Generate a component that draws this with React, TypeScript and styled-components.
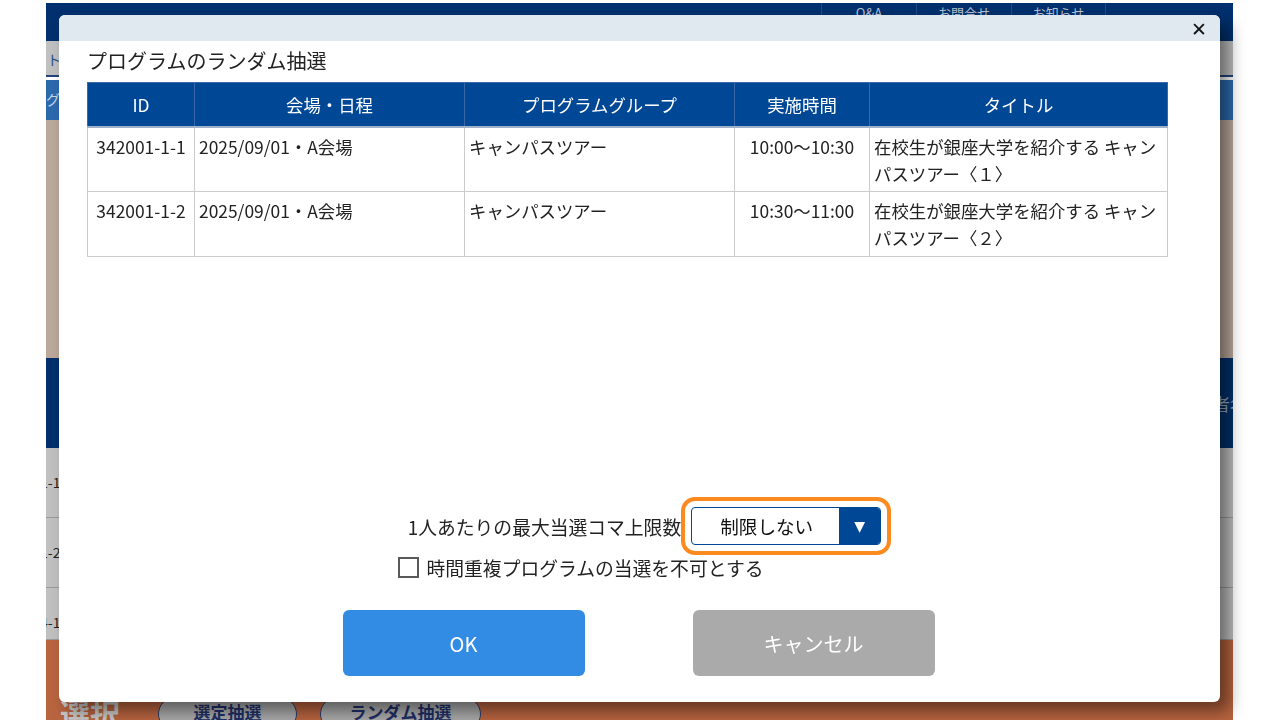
import React from "react";
import styled, { createGlobalStyle } from "styled-components";

const Global = createGlobalStyle`
  html, body { margin: 0; padding: 0; background: #ffffff; }
  body { font-family: "Noto Sans CJK JP", "Noto Sans", sans-serif; overflow: hidden; }
  * { box-sizing: border-box; }
`;

/* ---------- background page (dimmed) ---------- */
const Page = styled.div`
  width: 1187px;
  margin: 3px 0 0 46px;
  height: 717px;
  overflow: hidden;
  display: flex;
  flex-direction: column;
`;

const TopBar = styled.header`
  height: 38px;
  flex: none;
  background: #00306e;
  display: flex;
  justify-content: flex-end;
  padding-right: 127px;
`;

const NavItem = styled.div`
  width: 95px;
  border-left: 1px solid #1f4a86;
  &:last-child { border-right: 1px solid #1f4a86; }
  color: #b9c3d3;
  font-size: 13px;
  text-align: center;
  line-height: 20px;
`;

const GrayBand = styled.div`
  height: 36px;
  flex: none;
  background: #c0c0c0;
  border-bottom: 2px solid #24457a;
  color: #2b4f86;
  font-size: 14px;
  padding: 8px 0 0 1px;
`;

const BlueBand = styled.div`
  height: 40px;
  flex: none;
  margin-top: 3px;
  background: #2c6aae;
  color: #c8d6ea;
  font-size: 14px;
  padding: 9px 0 0 0;
`;

const PhotoBand = styled.div`
  height: 238px;
  flex: none;
  background: #bba89c;
`;

const NavyBand = styled.div`
  height: 90px;
  flex: none;
  background: #00306b;
  color: #9aa6b8;
  font-size: 17px;
  display: flex;
  align-items: center;
  justify-content: flex-end;
  & > span { margin-right: -14px; }
`;

const ListRow = styled.div<{ $h: number }>`
  height: ${(p) => p.$h}px;
  flex: none;
  background: #c0c0c0;
  border-bottom: 1px solid #9a9a9a;
  &:last-of-type { border-bottom: none; }
  font-size: 14px;
  color: #222;
  line-height: 20px;
  padding-top: 24px;
  margin-left: -6px;
`;

const ActionBand = styled.div`
  flex: 1;
  background: #b8643f;
  display: flex;
  align-items: flex-start;
  padding: 57px 0 0 14px;
`;

const BigLabel = styled.div`
  font-size: 30px;
  font-weight: 700;
  color: #c9c9c9;
  line-height: 1;
  margin-right: 38px;
`;

const Pill = styled.div<{ $w: number }>`
  width: ${(p) => p.$w}px;
  height: 34px;
  margin-right: 23px;
  border: 1px solid #2b3b70;
  border-radius: 17px;
  background: #a9a9a9;
  color: #1f2f66;
  font-weight: 700;
  font-size: 17px;
  text-align: center;
  line-height: 28px;
`;

/* ---------- modal ---------- */
const Modal = styled.div`
  position: fixed;
  left: 59px;
  top: 15px;
  width: 1161px;
  height: 687px;
  background: #ffffff;
  border-radius: 6px;
  box-shadow: 9px 9px 16px rgba(0, 0, 0, 0.45);
  display: flex;
  flex-direction: column;
  overflow: hidden;
`;

const ModalHead = styled.div`
  height: 26px;
  background: #e0e8f0;
  display: flex;
  justify-content: flex-end;
  align-items: center;
  padding-right: 13px;
`;

const Close = styled.span`
  font-family: "DejaVu Sans", sans-serif;
  font-size: 19px;
  font-weight: 700;
  color: #111;
  line-height: 1;
  margin-top: 3px;
`;

const ModalBody = styled.div`
  flex: 1;
  display: flex;
  flex-direction: column;
  padding: 0 54px 26px 28px;
`;

const Title = styled.h2`
  margin: 6px 0 0;
  font-size: 20px;
  font-weight: 400;
  color: #222;
  line-height: 28px;
  height: 35px;
`;

const TableArea = styled.div`
  flex: 1;
`;

const Table = styled.table`
  width: 1080px;
  border-collapse: collapse;
  table-layout: fixed;
  font-size: 17.4px;
  color: #222;
`;

const Th = styled.th`
  height: 44px;
  background: #004795;
  color: #fff;
  font-weight: 400;
  border: 1px solid #3b68a8;
  border-bottom: 2px solid #9fb2c9;
  padding: 0;
`;

const Td = styled.td<{ $align?: string }>`
  height: 65px;
  border: 1px solid #cccccc;
  vertical-align: top;
  text-align: ${(p) => p.$align || "left"};
  padding: 5px 4px 0;
  line-height: 27px;
`;

const Controls = styled.div`
  display: flex;
  flex-direction: column;
  align-items: center;
  padding-left: 26px;
`;

const LimitRow = styled.div`
  display: flex;
  align-items: center;
  gap: 10px;
  font-size: 18.8px;
  color: #222;
  margin-left: 10px;
  margin-top: -12px;
`;

const SelectBox = styled.div`
  width: 190px;
  height: 38px;
  border: 1px solid #004795;
  border-radius: 4px;
  display: flex;
  outline: 4px solid #fd8a1f;
  outline-offset: 6px;
  overflow: hidden;
`;

const SelectValue = styled.div`
  flex: 1;
  font-size: 18.6px;
  text-align: center;
  line-height: 36px;
  color: #111;
  padding-left: 2px;
`;

const SelectArrow = styled.div`
  width: 41px;
  background: #004795;
  color: #fff;
  display: flex;
  align-items: center;
  justify-content: center;
  font-size: 14px;
  font-family: "DejaVu Sans", sans-serif;
`;

const CheckRow = styled.label`
  display: flex;
  align-items: center;
  gap: 8px;
  font-size: 18.8px;
  color: #222;
  margin-top: 9px;
  margin-left: -118px;
`;

const Box = styled.span`
  width: 21px;
  height: 21px;
  border: 2px solid #5a5a5a;
  background: #fff;
`;

const Buttons = styled.div`
  display: flex;
  gap: 108px;
  margin-top: 29px;
  margin-left: -2px;
`;

const Btn = styled.button<{ $tone: "primary" | "muted" }>`
  width: 242px;
  height: 66px;
  border: none;
  border-radius: 6px;
  background: ${(p) => (p.$tone === "primary" ? "#338ce4" : "#aaaaaa")};
  color: #fff;
  font-family: "Noto Sans CJK JP", sans-serif;
  font-size: 20px;
`;

const rows = [
  { id: "342001-1-1", date: "2025/09/01・A会場", group: "キャンパスツアー", time: "10:00〜10:30", title: "在校生が銀座大学を紹介する キャンパスツアー〈１〉" },
  { id: "342001-1-2", date: "2025/09/01・A会場", group: "キャンパスツアー", time: "10:30〜11:00", title: "在校生が銀座大学を紹介する キャンパスツアー〈２〉" },
];

export default function App() {
  return (
    <>
      <Global />
      <Page>
        <TopBar>
          <NavItem>Q&amp;A</NavItem>
          <NavItem>お問合せ</NavItem>
          <NavItem>お知らせ</NavItem>
        </TopBar>
        <GrayBand>ト</GrayBand>
        <BlueBand>グラ</BlueBand>
        <PhotoBand />
        <NavyBand>
          <span>者名</span>
        </NavyBand>
        <ListRow $h={70}>1-1</ListRow>
        <ListRow $h={70}>1-2</ListRow>
        <ListRow $h={52}>4-1</ListRow>
        <ActionBand>
          <BigLabel>選択</BigLabel>
          <Pill $w={139}>選定抽選</Pill>
          <Pill $w={161}>ランダム抽選</Pill>
        </ActionBand>
      </Page>

      <Modal>
        <ModalHead>
          <Close>✕</Close>
        </ModalHead>
        <ModalBody>
          <Title>プログラムのランダム抽選</Title>
          <TableArea>
            <Table>
              <colgroup>
                <col style={{ width: 107 }} />
                <col style={{ width: 270 }} />
                <col style={{ width: 270 }} />
                <col style={{ width: 135 }} />
                <col style={{ width: 298 }} />
              </colgroup>
              <thead>
                <tr>
                  <Th>ID</Th>
                  <Th>会場・日程</Th>
                  <Th>プログラムグループ</Th>
                  <Th>実施時間</Th>
                  <Th>タイトル</Th>
                </tr>
              </thead>
              <tbody>
                {rows.map((r) => (
                  <tr key={r.id}>
                    <Td $align="center">{r.id}</Td>
                    <Td>{r.date}</Td>
                    <Td>{r.group}</Td>
                    <Td $align="center">{r.time}</Td>
                    <Td>{r.title}</Td>
                  </tr>
                ))}
              </tbody>
            </Table>
          </TableArea>
          <Controls>
            <LimitRow>
              <span>1人あたりの最大当選コマ上限数</span>
              <SelectBox>
                <SelectValue>制限しない</SelectValue>
                <SelectArrow>▼</SelectArrow>
              </SelectBox>
            </LimitRow>
            <CheckRow>
              <Box />
              <span>時間重複プログラムの当選を不可とする</span>
            </CheckRow>
            <Buttons>
              <Btn $tone="primary">OK</Btn>
              <Btn $tone="muted">キャンセル</Btn>
            </Buttons>
          </Controls>
        </ModalBody>
      </Modal>
    </>
  );
}
